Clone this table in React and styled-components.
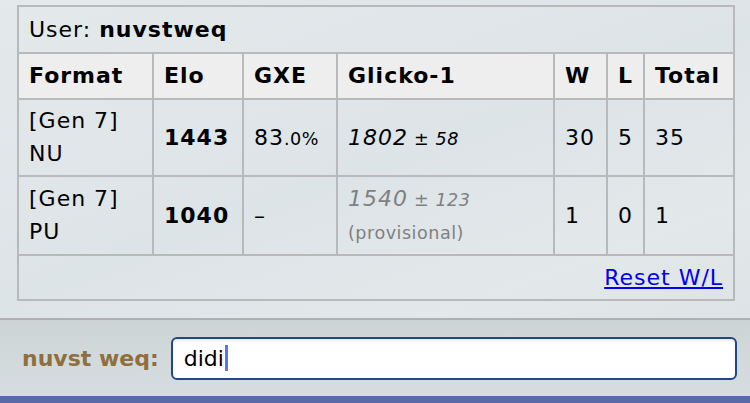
import styled, { createGlobalStyle } from "styled-components";

const GlobalStyle = createGlobalStyle`
  html, body {
    margin: 0;
    padding: 0;
    width: 750px;
    height: 403px;
    overflow: hidden;
    background: linear-gradient(160deg, #e4e9eb 0%, #dde4e7 45%, #e3e8ea 70%, #d9e0e3 100%);
    font-family: "DejaVu Sans", Verdana, sans-serif;
    font-size: 22px;
    color: #000;
  }
`;

const Page = styled.div`
  width: 750px;
  height: 403px;
  display: flex;
  flex-direction: column;
`;

const Panel = styled.div`
  height: 320px;
  box-sizing: border-box;
  padding: 5px 17px 0 17px;
  border-bottom: 2px solid #acb0b2;
`;

const Table = styled.table`
  width: 716px;
  border-collapse: collapse;
  table-layout: fixed;
  border: 2px solid #b8b9ba;
  letter-spacing: 1px;
`;

const Cell = styled.td`
  border: 2px solid #b8b9ba;
  padding: ${(p) => (p.$tall ? "5px 10px 6px" : "4px 10px 5px")};
  line-height: 33px;
  vertical-align: middle;
  white-space: ${(p) => (p.$nowrap ? "nowrap" : "normal")};
  font-weight: ${(p) => (p.$bold ? "bold" : "normal")};
`;

const HeadCell = styled.th`
  border: 2px solid #b8b9ba;
  padding: 5px 10px;
  line-height: 34px;
  text-align: left;
  font-weight: bold;
  background: #eeeeee;
`;

const UserCell = styled.td`
  border: 2px solid #b8b9ba;
  padding: 6px 10px 5px;
  line-height: 34px;
`;

const Small = styled.small`
  font-size: 0.8em;
  line-height: 1;
  letter-spacing: 0.5px;
`;

const Muted = styled.span`
  color: #808080;
`;

const FooterCell = styled.td`
  border: 2px solid #b8b9ba;
  padding: 5px 10px 5px;
  line-height: 33px;
  text-align: right;
`;

const ResetLink = styled.a`
  color: #0000ee;
  text-decoration: underline;
  cursor: pointer;
`;

const ChatBar = styled.div`
  height: 76px;
  box-sizing: border-box;
  display: flex;
  align-items: center;
  padding: 0 13px 0 22px;
  gap: 12px;
  background: linear-gradient(180deg, #cdd4d6 0%, #d3dadc 60%, #d6dde0 100%);
`;

const Label = styled.span`
  font-weight: bold;
  color: #8f6f3d;
  white-space: nowrap;
`;

const Input = styled.div`
  flex: 1;
  height: 43px;
  box-sizing: border-box;
  background: #fff;
  border: 2px solid #1f4787;
  border-radius: 6px;
  display: flex;
  align-items: center;
  padding-left: 11px;
  box-shadow: inset 0 2px 2px rgba(0, 0, 0, 0.08);
`;

const Caret = styled.span`
  display: inline-block;
  width: 3px;
  height: 26px;
  background: #5576f0;
  margin-left: 1px;
`;

const BlueBar = styled.div`
  flex: 1;
  background: #5a6aa8;
`;

export default function App() {
  return (
    <Page>
      <GlobalStyle />
      <Panel>
        <Table>
          <colgroup>
            <col style={{ width: 135 }} />
            <col style={{ width: 90 }} />
            <col style={{ width: 94 }} />
            <col style={{ width: 217 }} />
            <col style={{ width: 53 }} />
            <col style={{ width: 37 }} />
            <col style={{ width: 90 }} />
          </colgroup>
          <tbody>
            <tr>
              <UserCell colSpan={7}>
                User: <strong>nuvstweq</strong>
              </UserCell>
            </tr>
            <tr>
              <HeadCell>Format</HeadCell>
              <HeadCell>Elo</HeadCell>
              <HeadCell>GXE</HeadCell>
              <HeadCell>Glicko-1</HeadCell>
              <HeadCell>W</HeadCell>
              <HeadCell>L</HeadCell>
              <HeadCell>Total</HeadCell>
            </tr>
            <tr>
              <Cell>[Gen 7] NU</Cell>
              <Cell $bold>1443</Cell>
              <Cell $nowrap>
                83<Small>.0%</Small>
              </Cell>
              <Cell>
                <em>1802</em>
                <Small>
                  {" "}± <em>58</em>
                </Small>
              </Cell>
              <Cell>30</Cell>
              <Cell>5</Cell>
              <Cell>35</Cell>
            </tr>
            <tr>
              <Cell $tall>[Gen 7] PU</Cell>
              <Cell $bold>1040</Cell>
              <Cell>–</Cell>
              <Cell>
                <Muted>
                  <em>
                    1540<Small> ± 123</Small>
                  </em>{" "}
                  <Small>(provisional)</Small>
                </Muted>
              </Cell>
              <Cell>1</Cell>
              <Cell>0</Cell>
              <Cell>1</Cell>
            </tr>
            <tr>
              <FooterCell colSpan={7}>
                <ResetLink>Reset W/L</ResetLink>
              </FooterCell>
            </tr>
          </tbody>
        </Table>
      </Panel>
      <ChatBar>
        <Label>nuvst weq:</Label>
        <Input>
          didi
          <Caret />
        </Input>
      </ChatBar>
      <BlueBar />
    </Page>
  );
}
